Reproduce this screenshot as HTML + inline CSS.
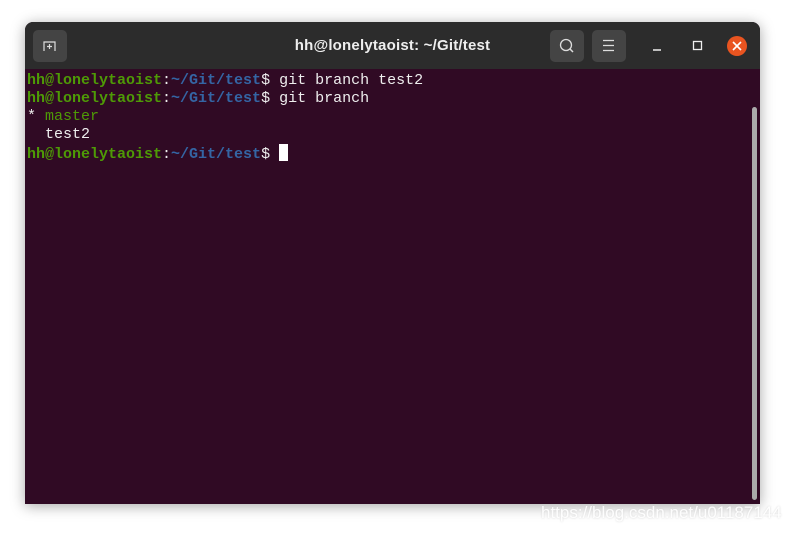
<!DOCTYPE html>
<html><head><style>
body{margin:0;width:786px;height:533px;background:#fff;position:relative;overflow:hidden;font-family:"Liberation Sans",sans-serif}
.win{position:absolute;left:25px;top:22px;width:735px;height:482px;background:#300a24;border-radius:8px 8px 0 0;box-shadow:0 2px 14px rgba(0,0,0,.35);overflow:hidden}
.tb{position:absolute;left:0;top:0;width:735px;height:47px;background:#2c2c2c}
.btn{position:absolute;top:8px;width:34px;height:32px;background:#444;border-radius:5px}
.title{position:absolute;left:0;width:735px;top:15px;text-align:center;color:#eee;font-weight:bold;font-size:15px;letter-spacing:0.2px}
.term{position:absolute;left:2px;top:50px;font-family:"Liberation Mono",monospace;font-size:15px;line-height:18px;color:#eee;white-space:pre}
.g{color:#4e9a06;font-weight:bold}.b{color:#3465a4;font-weight:bold}.m{color:#4e9a06}
.cur{display:inline-block;width:9px;height:17px;background:#fff;vertical-align:-3px}
.sb{position:absolute;left:727px;top:85px;width:5px;height:393px;background:#aaa;border-radius:3px}
.wm{position:absolute;left:541px;top:503px;font-size:17px;color:#fff;text-shadow:0 0 2px #ccc;opacity:.9}
</style></head><body>
<div class="win">
<div class="tb">
<div class="btn" style="left:8px"><svg width="34" height="32"><path d="M11 21V12h11v9M14 16.5h5M16.5 14v5" stroke="#ddd" stroke-width="1.2" fill="none"/></svg></div>
<div class="title">hh@lonelytaoist: ~/Git/test</div>
<div class="btn" style="left:525px"><svg width="34" height="32"><circle cx="16" cy="15" r="5.5" stroke="#ddd" stroke-width="1.3" fill="none"/><path d="M20 19l3 3" stroke="#ddd" stroke-width="1.5"/></svg></div>
<div class="btn" style="left:567px"><svg width="34" height="32"><path d="M11 10.5h11M11 15.5h11M11 20.5h11" stroke="#ddd" stroke-width="1.2"/></svg></div>
<svg style="position:absolute;left:620px;top:10px" width="110" height="30"><path d="M8 18h8" stroke="#eee" stroke-width="1.4"/><rect x="48.5" y="9.5" width="8" height="8" stroke="#eee" stroke-width="1.3" fill="none"/><circle cx="92" cy="14" r="10" fill="#e95420"/><path d="M88 10l8 8M96 10l-8 8" stroke="#fff" stroke-width="1.6"/></svg>
</div>
<div class="term"><span class="g">hh@lonelytaoist</span>:<span class="b">~/Git/test</span>$ git branch test2
<span class="g">hh@lonelytaoist</span>:<span class="b">~/Git/test</span>$ git branch
* <span class="m">master</span>
  test2
<span class="g">hh@lonelytaoist</span>:<span class="b">~/Git/test</span>$ <span class="cur"></span></div>
<div class="sb"></div>
</div>
<div class="wm">https://blog.csdn.net/u01187144</div>
</body></html>
